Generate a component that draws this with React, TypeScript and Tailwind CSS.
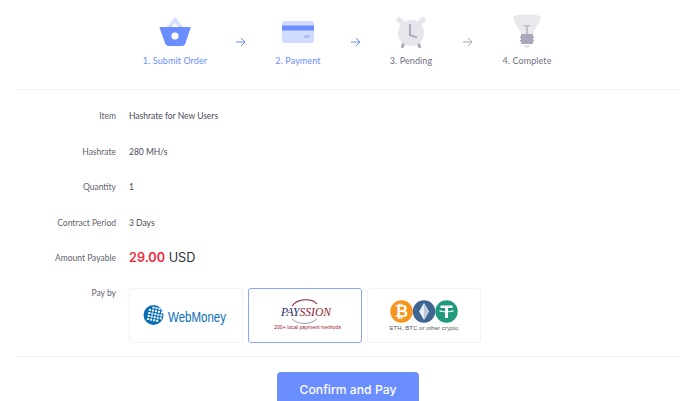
import React from "react";

const BLUE = "#6a8dff";

function Basket() {
  return (
    <svg width="34" height="34" viewBox="0 0 34 34">
      <path d="M9 14 L17 4 L25 14" fill="none" stroke="#d3deff" strokeWidth="3.6" />
      <path d="M2 11 H32 C32.6 11 32.6 12 32.4 12.6 L27.5 27 C27 29 25.5 30 24 30 H10.5 C9 30 7.5 29 7 27 L1.8 12.6 C1.5 12 1.5 11 2 11 Z" fill="#6a8dff" />
      <circle cx="17" cy="20" r="3.6" fill="#fff" />
    </svg>
  );
}
function Card() {
  return (
    <svg width="32" height="22" viewBox="0 0 32 22">
      <rect x="0" y="0" width="32" height="22" rx="3" fill="#cfdcff" />
      <rect x="0" y="4.5" width="32" height="5" fill="#6a8dff" />
      <rect x="22" y="14" width="6" height="3" rx="1.5" fill="#a9bfff" />
    </svg>
  );
}
function Clock() {
  return (
    <svg width="32" height="36" viewBox="0 0 32 36">
      <rect x="1" y="4.5" width="9" height="5" rx="2.5" transform="rotate(40 5.5 7)" fill="#e4e4ea" />
      <rect x="22" y="4.5" width="9" height="5" rx="2.5" transform="rotate(-40 26.5 7)" fill="#e4e4ea" />
      <path d="M8.5 30 L7.5 32.5" stroke="#a8a8b8" strokeWidth="3" strokeLinecap="round" />
      <path d="M23.5 30 L24.5 32.5" stroke="#a8a8b8" strokeWidth="3" strokeLinecap="round" />
      <circle cx="16" cy="19" r="13" fill="#e6e6ec" />
      <path d="M15 10 V21 L22 23.5" fill="none" stroke="#a5a5b6" strokeWidth="1.8" />
    </svg>
  );
}
function Bulb() {
  return (
    <svg width="28" height="36" viewBox="0 0 28 36">
      <path d="M1 2 C8 0 20 0 27 2 C28 3 27.5 6 26 9 L18.5 21 H9.5 L2 9 C0.5 6 0 3 1 2 Z" fill="#e8e8ed" />
      <rect x="10.5" y="11" width="7" height="1.6" fill="#c2c2cd" />
      <rect x="13" y="11" width="2" height="10" fill="#c2c2cd" />
      <rect x="8" y="20" width="12" height="10" rx="1" fill="#a9a9ba" />
      <path d="M7 23 H21 M7 26.5 H21" stroke="#a9a9ba" strokeWidth="1.4" />
      <path d="M10.5 31 H17.5 L15.5 34 H12.5 Z" fill="#e4e4ea" />
    </svg>
  );
}
function Arrow({ color }: { color: string }) {
  return (
    <svg width="10" height="10" viewBox="0 0 10 10" fill="none" stroke={color} strokeWidth="1">
      <path d="M0 5 H8.5" />
      <path d="M5 1 L9 5 L5 9" />
    </svg>
  );
}

function Step({ icon, label, active }: { icon: React.ReactNode; label: string; active?: boolean }) {
  return (
    <div className="flex w-[90px] flex-col items-center">
      <div className="flex h-[36px] items-end justify-center">{icon}</div>
      <div className={`mt-[5px] whitespace-nowrap font-['Lato',sans-serif] text-[9px] leading-[12px] tracking-[0.1px] ${active ? "text-[#6a8dff]" : "text-[#71717f]"}`}>
        {label}
      </div>
    </div>
  );
}

function Row({ label, children }: { label: string; children: React.ReactNode }) {
  return (
    <div className="flex h-[35.5px] items-center font-['Lato',sans-serif]">
      <div className="w-[116px] text-right text-[8.5px] text-[#62626f]">{label}</div>
      <div className="ml-[13px] text-[8.5px] text-[#4a4a58]">{children}</div>
    </div>
  );
}

function WebMoney() {
  const dots: React.ReactNode[] = [];
  for (let r = 0; r < 5; r++) {
    for (let c = 0; c < 5; c++) {
      if (r + c < 1 || (r === 4 && c === 4)) continue;
      dots.push(<rect key={`${r}-${c}`} x={6.5 + c * 3 - r * 0.6} y={3 + r * 3 + c * 0.6} width="2" height="2" fill="#fff" />);
    }
  }
  return (
    <svg width="86" height="24" viewBox="0 0 86 24" className="overflow-visible">
      <circle cx="10.5" cy="12" r="10" fill="#0a6fb6" />
      {dots}
      <text x="25" y="18.5" fontFamily="'Liberation Sans', sans-serif" fontSize="15" fill="#0a6fb6" textLength="58" lengthAdjust="spacingAndGlyphs">WebMoney</text>
    </svg>
  );
}

function Payssion() {
  return (
    <svg width="70" height="34" viewBox="0 0 70 34" className="overflow-visible">
      <path d="M22 8 C28 0 42 0 47 6" fill="none" stroke="#8d1d2c" strokeWidth="1.1" />
      <path d="M22 21 C28 27 40 27 47 21" fill="none" stroke="#9c9cb0" strokeWidth="1" />
      <text x="11" y="17.5" fontFamily="'Liberation Serif', serif" fontStyle="italic" fontSize="13" fill="#1d2a6d" textLength="50" lengthAdjust="spacingAndGlyphs">
        PAY<tspan fill="#8d1d2c">SSION</tspan>
      </text>
      <text x="4" y="31" fontFamily="'Liberation Sans', sans-serif" fontSize="5.5" fill="#a0202a" textLength="67" lengthAdjust="spacingAndGlyphs">200+ local payment methods</text>
    </svg>
  );
}

function Crypto() {
  return (
    <div className="flex flex-col items-center pt-[2px]">
      <svg width="68" height="23" viewBox="0 0 68 23">
        <circle cx="11.5" cy="11.5" r="11.2" fill="#f7941d" />
        <text x="11.5" y="17" textAnchor="middle" fontFamily="'Liberation Sans', sans-serif" fontWeight="700" fontSize="16" fill="#fff">₿</text>
        <circle cx="34" cy="11.5" r="11.2" fill="#3f6690" />
        <path d="M34 3 L39 11.5 L34 20 L29 11.5 Z" fill="#e8eef5" />
        <path d="M34 3 V20 L39 11.5 Z" fill="#bccbdc" />
        <circle cx="56.5" cy="11.5" r="11.2" fill="#1f9a7c" />
        <path d="M50.5 5.5 H62.5 V8 H58 V18 H55 V8 H50.5 Z" fill="#fff" />
        <path d="M49.5 10.5 C52 12.3 61 12.3 63.5 10.5" fill="none" stroke="#fff" strokeWidth="1.2" />
      </svg>
      <div className="mt-[1px] whitespace-nowrap font-['Liberation_Sans',sans-serif] text-[6px] leading-[8px] tracking-[0.05px] text-[#55555f]">ETH, BTC or other crypto</div>
    </div>
  );
}

function PayCard({ children, selected }: { children: React.ReactNode; selected?: boolean }) {
  return (
    <div className={`flex h-[55px] w-[114px] items-center justify-center rounded-[3px] border ${selected ? "border-[#8aa5ff]" : "border-[#f3f3f6]"}`}>
      {children}
    </div>
  );
}

export default function App() {
  return (
    <div className="h-[401px] w-[700px] overflow-hidden bg-white font-['Inter',sans-serif]">
      <div className="flex h-[89px] items-start pt-[14px] pl-[130px]">
        <Step icon={<Basket />} label="1. Submit Order" active />
        <div className="mt-[23px] ml-[16px] flex w-[10px]"><Arrow color={BLUE} /></div>
        <div className="ml-[7px]"><Step icon={<div className="pb-[7px]"><Card /></div>} label="2. Payment" active /></div>
        <div className="mt-[23px] ml-[8px] flex w-[10px]"><Arrow color={BLUE} /></div>
        <div className="ml-[5px]"><Step icon={<Clock />} label="3. Pending" /></div>
        <div className="mt-[23px] ml-[7px] flex w-[10px]"><Arrow color="#a5a5b2" /></div>
        <div className="ml-[9px]"><Step icon={<Bulb />} label="4. Complete" /></div>
      </div>

      <div className="mx-4 w-[664px] border-t border-[#f1f1f3]" />

      <div className="mt-[9px]">
        <Row label="Item">Hashrate for New Users</Row>
        <Row label="Hashrate">280 MH/s</Row>
        <Row label="Quantity">1</Row>
        <Row label="Contract Period">3 Days</Row>
        <Row label="Amount Payable">
          <span className="font-['Inter',sans-serif] text-[12.7px] leading-none tracking-normal text-[#2f2f3c]">
            <span className="font-semibold text-[#f2283c]">29.00</span> USD
          </span>
        </Row>
      </div>

      <div className="mt-[11px] flex items-start font-['Lato',sans-serif]">
        <div className="w-[116px] text-right text-[8.5px] leading-[10px] text-[#62626f]">Pay by</div>
        <div className="ml-[13px] flex gap-[5px]">
          <PayCard><WebMoney /></PayCard>
          <PayCard selected><Payssion /></PayCard>
          <PayCard><Crypto /></PayCard>
        </div>
      </div>

      <div className="mx-4 mt-[13px] w-[664px] border-t border-[#f1f1f3]" />

      <div className="mt-[15px] ml-[277px] flex h-[44px] w-[142px] items-start justify-center rounded-[4px] bg-[#6a8dff] pt-[9px] text-[12.2px] font-medium leading-[18px] text-white">
        Confirm and Pay
      </div>
    </div>
  );
}
